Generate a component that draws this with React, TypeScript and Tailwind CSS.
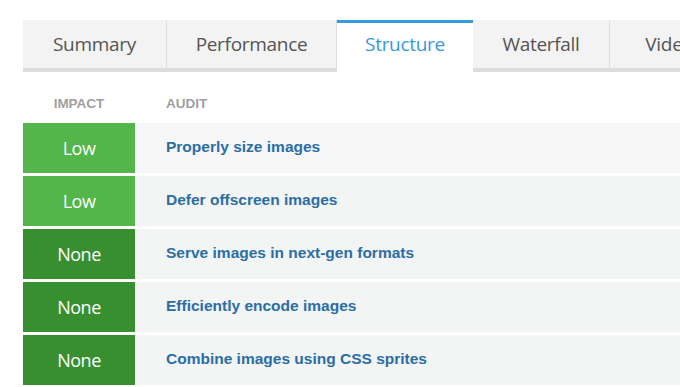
const tabs = [
  { label: "Summary", width: "w-[144px]" },
  { label: "Performance", width: "w-[170px]" },
  { label: "Structure", width: "w-[136px]", active: true },
  { label: "Waterfall", width: "w-[137px]" },
  { label: "Video", width: "w-[120px]" },
];

const audits = [
  { impact: "Low", title: "Properly size images" },
  { impact: "Low", title: "Defer offscreen images" },
  { impact: "None", title: "Serve images in next-gen formats" },
  { impact: "None", title: "Efficiently encode images" },
  { impact: "None", title: "Combine images using CSS sprites" },
];

export default function App() {
  return (
    <div className="w-[680px] h-[387px] overflow-hidden bg-white pl-[23px] pt-[20px] font-['Liberation_Sans',Arial,sans-serif]">
      {/* Tabs */}
      <div className="flex w-[800px] font-['Open_Sans',sans-serif] text-[19px]">
        {tabs.map(t =>
          t.active ? (
            <div
              key={t.label}
              className={`${t.width} shrink-0 h-[52px] bg-white border-t-[3px] border-[#3a98dc] flex items-center justify-center pb-[6px] text-[#3a98dc] tracking-[-0.3px]`}
            >
              {t.label}
            </div>
          ) : (
            <div
              key={t.label}
              className={`${t.width} shrink-0 h-[52px] bg-[#f3f3f3] border-b-4 border-b-[#dcdcdc] border-r border-r-[#dddddd] flex items-center justify-center pt-[1px] text-[#555555] tracking-[-0.3px]`}
            >
              {t.label}
            </div>
          )
        )}
      </div>

      {/* Header */}
      <div className="flex items-end h-[51px] pb-[9px] text-[13.5px] font-bold text-[#a0a0a0]">
        <div className="w-[112px] text-center">IMPACT</div>
        <div className="pl-[31px]">AUDIT</div>
      </div>

      {/* Rows */}
      <div className="flex flex-col gap-[3px]">
        {audits.map((a, i) => (
          <div key={i} className="flex h-[50px]">
            <div
              className={`w-[112px] shrink-0 flex items-center justify-center text-white text-[18px] font-['Open_Sans',sans-serif] tracking-[-0.5px] ${
                a.impact === "Low" ? "bg-[#53b54a]" : "bg-[#388f30]"
              }`}
            >
              {a.impact}
            </div>
            <div
              className={`flex-1 flex items-center pl-[31px] pb-[2px] text-[15.5px] font-bold text-[#2a6ea6] ${
                i === 0 ? "bg-[#f6f6f6]" : "bg-[#f3f4f4]"
              }`}
            >
              {a.title}
            </div>
          </div>
        ))}
      </div>
    </div>
  );
}
